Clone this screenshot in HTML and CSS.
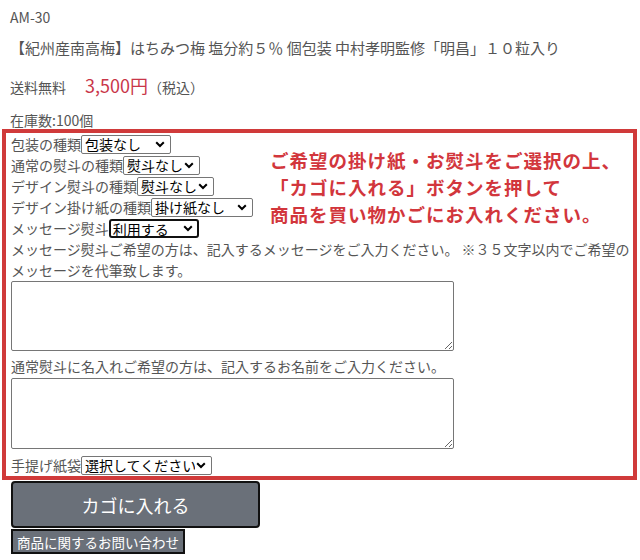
FILE: index.html
```html
<!DOCTYPE html>
<html lang="ja">
<head>
  <meta charset="UTF-8">
  <meta name="viewport" content="width=device-width, initial-scale=1.0">
  <title>AM-30 はちみつ梅</title>
  <link rel="stylesheet" href="styles.css">
</head>
<body>
  <div class="item">
    <p class="code">AM-30</p>
    <p class="title">【紀州産南高梅】はちみつ梅 塩分約５％ 個包装 中村孝明監修「明昌」１０粒入り</p>
    <p class="price-line">送料無料<span class="price">3,500円</span>（税込）</p>
    <p class="stock">在庫数:100個</p>
  </div>

  <form class="order-box">
    <p class="notice">ご希望の掛け紙・お熨斗をご選択の上、<br>「カゴに入れる」ボタンを押して<br>商品を買い物かごにお入れください。</p>

    <div class="row">
      <label>包装の種類</label>
      <select class="w90"><option>包装なし</option></select>
    </div>
    <div class="row">
      <label>通常の熨斗の種類</label>
      <select class="w77"><option>熨斗なし</option></select>
    </div>
    <div class="row">
      <label>デザイン熨斗の種類</label>
      <select class="w77"><option>熨斗なし</option></select>
    </div>
    <div class="row">
      <label>デザイン掛け紙の種類</label>
      <select class="w102"><option>掛け紙なし</option></select>
    </div>
    <div class="row">
      <label>メッセージ熨斗</label>
      <select class="w90 active"><option>利用する</option></select>
    </div>

    <p class="note">メッセージ熨斗ご希望の方は、記入するメッセージをご入力ください。 ※３５文字以内でご希望のメッセージを代筆致します。</p>
    <textarea class="msg"></textarea>

    <p class="note name-label">通常熨斗に名入れご希望の方は、記入するお名前をご入力ください。</p>
    <textarea class="name"></textarea>

    <div class="row bag">
      <label>手提げ紙袋</label>
      <select class="w131"><option>選択してください</option></select>
    </div>
  </form>

  <div class="buttons">
    <button type="button" class="cart">カゴに入れる</button>
    <button type="button" class="contact">商品に関するお問い合わせ</button>
  </div>
</body>
</html>
```

FILE: styles.css
```css
body {
  margin: 0;
  font-family: "Noto Sans CJK JP", "Noto Sans", sans-serif;
  font-size: 14px;
  color: #555;
  background-color: #fff;
}
p {
  margin: 0;
}
.item {
  padding-left: 10px;
}
.code {
  padding-top: 7px;
  line-height: 20px;
}
.title {
  margin-top: 10px;
  font-size: 15px;
  line-height: 22px;
}
.price-line {
  margin-top: 13px;
  line-height: 26px;
}
.price {
  margin-left: 19px;
  font-size: 18px;
  color: #c93649;
}
.stock {
  margin-top: 12px;
  line-height: 17px;
}

.order-box {
  margin: 0 0 0 2px;
  width: 635px;
  box-sizing: border-box;
  border: 4px solid #d03a3a;
  padding: 1px 0 1px 5px;
}
.notice {
  float: right;
  width: 363px;
  margin-top: 13px;
  font-size: 18.5px;
  letter-spacing: 1px;
  line-height: 27px;
  font-weight: bold;
  color: #d2363c;
}
.row {
  display: flex;
  align-items: center;
  height: 21px;
  line-height: 21px;
}
.row.bag {
  height: 20px;
  margin-top: 6px;
}
select {
  -webkit-appearance: none;
  appearance: none;
  height: 19px;
  padding: 0 16px 0 3px;
  font-family: inherit;
  font-size: 14px;
  line-height: 17px;
  color: #000;
  background: #fff url("data:image/svg+xml,%3Csvg xmlns='http://www.w3.org/2000/svg' width='10' height='7' viewBox='0 0 10 7'%3E%3Cpath d='M1.2 1.2 L5 5 L8.8 1.2' fill='none' stroke='%23000' stroke-width='2'/%3E%3C/svg%3E") no-repeat right 5px center;
  border: 1px solid #767676;
  border-radius: 2px;
}
select.active {
  border: 2px solid #111;
  border-radius: 3px;
  padding-left: 2px;
  background-position: right 4px center;
}
.w77 { width: 77px; }
.w90 { width: 90px; }
.w102 { width: 102px; }
.w131 { width: 131px; }

.note {
  clear: both;
  line-height: 20.5px;
}
.name-label {
  margin-top: 5px;
  line-height: 20px;
}
textarea {
  display: block;
  width: 443px;
  box-sizing: border-box;
  border: 1px solid #767676;
  border-radius: 2px;
  resize: both;
}
.msg {
  margin-top: 1px;
  height: 70px;
}
.name {
  margin-top: 2px;
  height: 71px;
}

.buttons {
  padding-left: 11px;
}
button {
  display: block;
  font-family: inherit;
  color: #fff;
  background-color: #6a7079;
  border: 2px solid #111;
  cursor: pointer;
}
.cart {
  margin-top: 1px;
  width: 249px;
  height: 47px;
  font-size: 18px;
  border-radius: 4px;
}
.contact {
  margin-top: 1px;
  width: 174px;
  height: 25px;
  padding: 0;
  font-size: 13.5px;
  line-height: 20px;
}
```
